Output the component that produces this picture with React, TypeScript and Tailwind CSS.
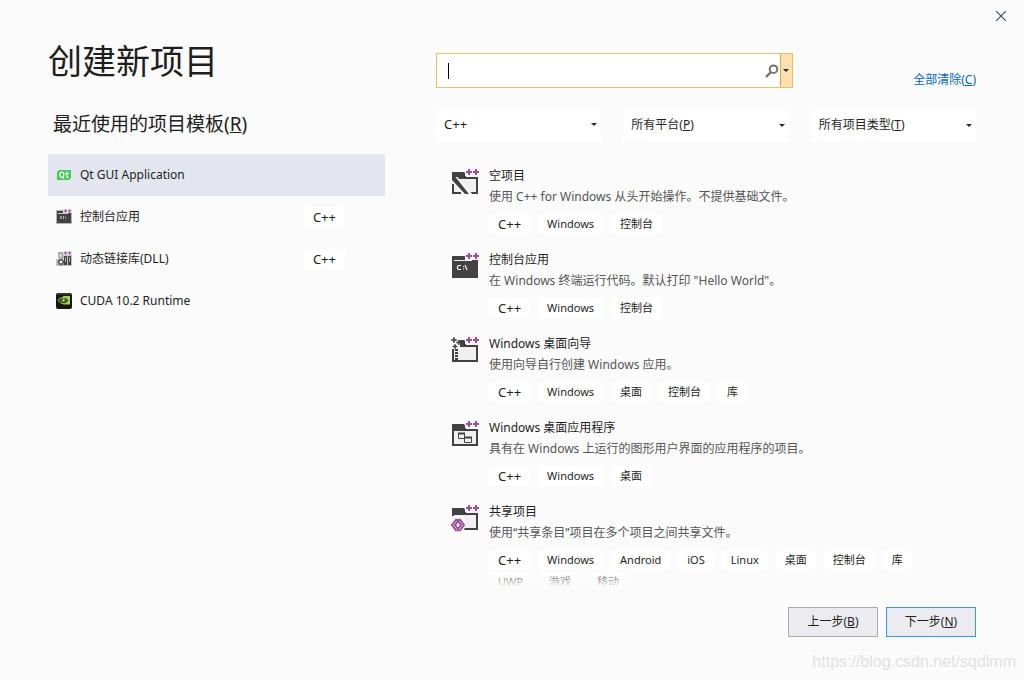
import { useState, type ReactNode } from "react";

const DARK = "#424242";
const PURPLE = "#9b4f96";

function Plusses() {
  return (
    <g>
      <path d="M14 0h15v8H14z" fill="#f6f6f6" />
      <path d="M15 4h6M18 1v6M22 4h6M25 1v6" stroke={PURPLE} strokeWidth="2" />
    </g>
  );
}

function Folder() {
  return (
    <g>
      <path d="M1 4h12l2 3v2H1z" fill={DARK} />
      <path d="M2 10h24v15H2z" fill="#f0f0f1" stroke={DARK} strokeWidth="2" />
    </g>
  );
}

function ProjectIcon({ children }: { children: ReactNode }) {
  return (
    <svg viewBox="0 0 28 28" className="mt-[3px] h-7 w-7 shrink-0 overflow-visible" aria-hidden="true">
      {children}
      <Plusses />
    </svg>
  );
}

const emptyIcon = (
  <ProjectIcon>
    <Folder />
    <path d="M0 8.500h6L22 27H0z" fill="#fbfbfb" />
    <path d="M1 4h12l2 3v2H1z" fill={DARK} />
    <path d="M1 9h3.500L18 26h-4L1 12z" fill={DARK} />
    <path d="M1 15.500L11 26H1z" fill="#f0f0f1" />
    <path d="M2 16v9h8" stroke={DARK} strokeWidth="2" fill="none" />
  </ProjectIcon>
);

const consoleIcon = (
  <ProjectIcon>
    <path d="M1 4h13l2 3h11v19H1z" fill={DARK} />
    <path d="M3 8.500h18" stroke="#f0f0f1" strokeWidth="1" />
    <path d="M10 13.500H7.500l-1 1v2l1 1H10M12.500 14v1M12.500 16.500v1M14 13l2 5" stroke="#f6f6f6" strokeWidth="1.200" fill="none" />
  </ProjectIcon>
);

const wizardIcon = (
  <ProjectIcon>
    <Folder />
    <path d="M-1 0h10v13H-1z" fill="#fbfbfb" />
    <path d="M8 4h5l2 3v3H9z" fill={DARK} />
    <path d="M5.500 13v11" stroke={DARK} strokeWidth="3" strokeDasharray="2 1" />
    <path d="M3 1l.8 2.200L6 4l-2.200.8L3 7l-.8-2.200L0 4l2.200-.8zM7.500 4l.6 1.900 1.900.6-1.900.6-.6 1.900-.6-1.900L5 6.500l1.900-.6zM4 8l.7 1.800 1.800.7-1.800.7L4 13l-.7-1.800-1.800-.7 1.800-.7z" fill={DARK} stroke={DARK} strokeWidth=".6" />
  </ProjectIcon>
);

const desktopIcon = (
  <ProjectIcon>
    <Folder />
    <path d="M7.500 13.500h6v5h-6z" fill="#f0f0f1" stroke={DARK} />
    <path d="M7 13.500h7" stroke={DARK} strokeWidth="2" />
    <path d="M13.500 17.500h7v5h-7z" fill="#f0f0f1" stroke={DARK} />
    <path d="M13 17.500h8" stroke={DARK} strokeWidth="2" />
  </ProjectIcon>
);

const sharedIcon = (
  <ProjectIcon>
    <Folder />
    <path d="M-1 12H12l3 8-3 9H-1z" fill="#fbfbfb" />
    <path d="M5.500 15L1 21l4.500 6M8.500 15l4.500 6-4.500 6M5.500 15L10 21l-4.500 6M8.500 15L4 21l4.500 6" stroke={PURPLE} strokeWidth="2" fill="none" />
  </ProjectIcon>
);

const qtIcon = (
  <svg viewBox="0 0 16 16" className="h-4 w-4 shrink-0" aria-hidden="true">
    <path d="M3 3h12v8l-2 2H1V5z" fill="#41cd52" />
    <g stroke="#fff" strokeWidth="1.200" fill="none">
      <ellipse cx="5.800" cy="7.800" rx="2" ry="2.800" />
      <path d="M6 9.500l2 2.200M10.800 4.800v5l1.700.8M9.200 6.700h3.600" />
    </g>
  </svg>
);

const smallConsoleIcon = (
  <svg viewBox="0 0 16 16" className="h-4 w-4 shrink-0" aria-hidden="true">
    <path d="M0 1h16v14H0z" fill="#b5b5b5" />
    <path d="M1 2h6l1 2h7v10H1z" fill={DARK} />
    <path d="M2 4.500h10" stroke="#c8c8c8" />
    <path d="M6 7.500H4.500v2H6M7.500 7v3M9 7.500l1 2" stroke="#ccc" strokeWidth=".8" fill="none" />
    <path d="M7 0h9v4H7z" fill="#ddd" />
    <path d="M8 2h3M9.500.5v3M12 2h3M13.500.5v3" stroke={PURPLE} />
  </svg>
);

const smallDllIcon = (
  <svg viewBox="0 0 16 16" className="h-4 w-4 shrink-0" aria-hidden="true">
    <path d="M2 1h5v5H2zM6 4h10v11H6zM0 8h7v7H0z" fill="#c4c4c4" />
    <path d="M8 5h3v9H8zM12 5h3v9h-3z" fill={DARK} />
    <path d="M9.500 6v5M13.500 6v5" stroke="#aaa" />
    <path d="M3 2h3v5H3z" fill="#eee" stroke="#888" />
    <circle cx="5" cy="11" r="2.200" fill="#eee" stroke={DARK} strokeWidth="1.200" />
    <path d="M5 7.500v1.200M5 13v1.500M1.500 11h1.200M7 11h1.500M2.500 8.500l1 1M2.500 13.500l1-1M7.500 13.500l-1-1" stroke={DARK} />
    <path d="M7 0h9v4H7z" fill="#ddd" />
    <path d="M8 2h3M9.500.5v3M12 2h3M13.500.5v3" stroke={PURPLE} />
  </svg>
);

const cudaIcon = (
  <svg viewBox="0 0 16 16" className="h-4 w-4 shrink-0" aria-hidden="true">
    <rect width="16" height="16" rx="2" fill="#151515" />
    <path d="M1 1h14" stroke="#555" />
    <path d="M7 3h7v8.500H7z" fill="#a5d43b" />
    <path d="M2 7.200C4 4 9 3 12.500 7c-2 4.500-7.500 5-10.500.2z" fill="#151515" stroke="#a5d43b" />
    <path d="M4.500 7.200c1.500-2 4-2 5.500 0-1.500 2-4 2.200-5.500 0z" fill="#151515" stroke="#a5d43b" />
    <circle cx="7.500" cy="7.200" r="1" fill="#d9ef9a" />
  </svg>
);

const recent = [
  { name: "Qt GUI Application", icon: qtIcon },
  { name: "控制台应用", icon: smallConsoleIcon, tag: "C++" },
  { name: "动态链接库(DLL)", icon: smallDllIcon, tag: "C++" },
  { name: "CUDA 10.2 Runtime", icon: cudaIcon },
];

const templates = [
  {
    name: "空项目",
    text: "使用 C++ for Windows 从头开始操作。不提供基础文件。",
    icon: emptyIcon,
    tags: ["C++", "Windows", "控制台"],
  },
  {
    name: "控制台应用",
    text: "在 Windows 终端运行代码。默认打印 \"Hello World\"。",
    icon: consoleIcon,
    tags: ["C++", "Windows", "控制台"],
  },
  {
    name: "Windows 桌面向导",
    text: "使用向导自行创建 Windows 应用。",
    icon: wizardIcon,
    tags: ["C++", "Windows", "桌面", "控制台", "库"],
  },
  {
    name: "Windows 桌面应用程序",
    text: "具有在 Windows 上运行的图形用户界面的应用程序的项目。",
    icon: desktopIcon,
    tags: ["C++", "Windows", "桌面"],
  },
  {
    name: "共享项目",
    text: "使用“共享条目”项目在多个项目之间共享文件。",
    icon: sharedIcon,
    tags: ["C++", "Windows", "Android", "iOS", "Linux", "桌面", "控制台", "库", "UWP", "游戏", "移动"],
  },
];

function Tag({ label }: { label: string }) {
  return (
    <span
      className={
        label === "C++"
          ? "rounded bg-white px-[9px] text-[13px] leading-5"
          : "rounded bg-white px-[9px] text-[11px] leading-5"
      }
    >
      {label}
    </span>
  );
}

function Arrow() {
  return (
    <svg viewBox="0 0 6 3" className="h-[3px] w-1.5 shrink-0" aria-hidden="true">
      <path d="M0 0h6L3 3z" fill="#1e2a3a" />
    </svg>
  );
}

function Filter({ label, value, accessKey }: { label: string; value: string; accessKey?: string }) {
  return (
    <label className="grid h-8 items-center bg-white">
      <select
        aria-label={label}
        accessKey={accessKey}
        className="col-start-1 row-start-1 h-8 w-full appearance-none bg-transparent text-transparent outline-none"
      >
        <option>{value}</option>
      </select>
      <span aria-hidden="true" className="pointer-events-none col-start-1 row-start-1 flex items-center justify-between pr-1 pl-2">
        <span className={value === "C++" ? "text-[13px]" : "text-xs"}>
          {value}
          {accessKey && (
            <>
              (<u>{accessKey}</u>)
            </>
          )}
        </span>
        <Arrow />
      </span>
    </label>
  );
}

export default function App() {
  const [selected, setSelected] = useState(0);
  const [query, setQuery] = useState("");

  return (
    <main className="relative flex h-screen flex-col bg-[#fbfbfb] font-['Noto_Sans','Noto_Sans_CJK_SC',sans-serif] text-xs text-[#1e1e1e]">
      <button aria-label="关闭" className="absolute top-2 right-[15px] p-[3px]">
        <svg viewBox="0 0 10 10" className="h-[10px] w-[10px]" aria-hidden="true">
          <path d="M0 0l10 10M10 0L0 10" stroke="#3b4654" strokeWidth="1.100" />
        </svg>
      </button>

      <div className="grid min-h-0 flex-1 grid-cols-[337fr_540fr] gap-x-[51px] px-12">
        <section className="pt-[35px]">
          <h1 className="text-[34px] leading-[52px]">创建新项目</h1>
          <h2 className="mt-[22px] mb-[15px] pl-[5px] text-[19px] leading-[30px]">
            最近使用的项目模板(<u>R</u>)
          </h2>
          <ul>
            {recent.map((item, i) => (
              <li key={item.name}>
                <button
                  onClick={() => setSelected(i)}
                  className={
                    i === selected
                      ? "flex h-[42px] w-full items-center gap-2 bg-[#e3e6ee] pr-10 pl-2 text-left"
                      : "flex h-[42px] w-full items-center gap-2 pr-10 pl-2 text-left"
                  }
                >
                  {item.icon}
                  <span className="flex-1">{item.name}</span>
                  {item.tag && <Tag label={item.tag} />}
                </button>
              </li>
            ))}
          </ul>
        </section>

        <section className="flex min-h-0 flex-col pt-[53px]">
          <div className="flex justify-between">
            <div className="flex h-[35px] w-[357px] border border-[#e5c365] bg-white">
              <div className="flex flex-1 items-center pl-[11px]">
                <span className="h-4 w-px bg-black" />
                <input
                  aria-label="搜索模板"
                  value={query}
                  onChange={(e) => setQuery(e.target.value)}
                  className="h-full min-w-0 flex-1 bg-transparent caret-transparent outline-none"
                />
                <svg viewBox="0 0 14 14" className="mr-px h-[14px] w-[14px]" aria-hidden="true">
                  <circle cx="8.500" cy="5.200" r="3.800" fill="none" stroke="#717171" strokeWidth="2" />
                  <path d="M6 8l-5 5" stroke="#717171" strokeWidth="2.400" />
                </svg>
              </div>
              <button aria-label="搜索选项" className="flex w-3 items-center border-l border-[#dca555] bg-[#fde0ad] pl-0.5">
                <Arrow />
              </button>
            </div>
            <a href="#clear" className="mt-[17px] leading-5 text-[#0066cc]">
              全部清除(<u>C</u>)
            </a>
          </div>

          <div className="mt-[19px] grid grid-cols-3 gap-[22px]">
            <Filter label="语言" value="C++" />
            <Filter label="平台" value="所有平台" accessKey="P" />
            <Filter label="项目类型" value="所有项目类型" accessKey="T" />
          </div>

          <div className="relative mt-6 min-h-0 flex-1 overflow-hidden">
            <ul>
              {templates.map((t) => (
                <li key={t.name} className="flex gap-[10px] pb-[15px] pl-[15px]">
                  {t.icon}
                  <div className="min-w-0 flex-1">
                    <h3 className="leading-[21px]">{t.name}</h3>
                    <p className="leading-[21px] text-[#555555]">{t.text}</p>
                    <div className="mt-[7px] flex flex-wrap gap-x-2 gap-y-0.5 pr-10">
                      {t.tags.map((tag) => (
                        <Tag key={tag} label={tag} />
                      ))}
                    </div>
                  </div>
                </li>
              ))}
            </ul>
            <div className="pointer-events-none absolute inset-x-0 bottom-0 h-5 bg-linear-to-b from-transparent to-[#fbfbfb] to-90%" />
          </div>
        </section>
      </div>

      <footer className="flex justify-end gap-2 px-12 pt-[18px] pb-[43px]">
        <button className="h-[30px] w-[90px] border border-[#acacac] bg-[#ececf0]">
          上一步(<u>B</u>)
        </button>
        <button className="h-[30px] w-[90px] border border-[#3399ff] bg-[#ececf0]">
          下一步(<u>N</u>)
        </button>
      </footer>
      <p className="pointer-events-none absolute right-2 bottom-1.5 font-['Liberation_Sans',sans-serif] text-base text-[#e2e2e2]">
        https://blog.csdn.net/sqdlmm
      </p>
    </main>
  );
}
